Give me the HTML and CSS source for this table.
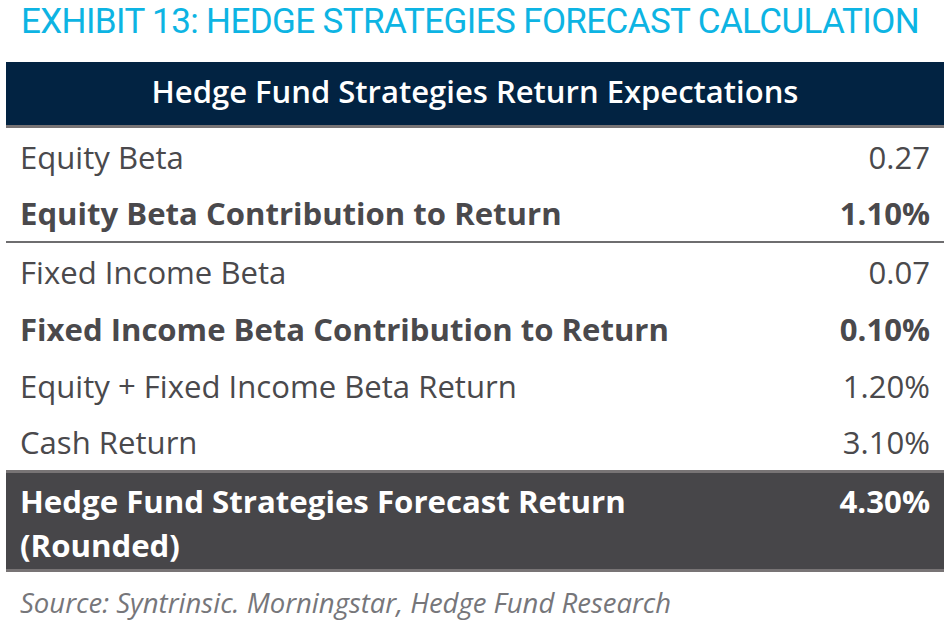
FILE: index.html
```html
<!DOCTYPE html>
<html>
<head>
<meta charset="utf-8">
<link rel="stylesheet" href="styles.css">
</head>
<body>
<div class="page">
  <h1 class="title">EXHIBIT 13: HEDGE STRATEGIES FORECAST CALCULATION</h1>
  <div class="table">
    <div class="head">Hedge Fund Strategies Return Expectations</div>
    <div class="row"><span>Equity Beta</span><span>0.27</span></div>
    <div class="row bold short"><span>Equity Beta Contribution to Return</span><span>1.10%</span></div>
    <div class="row divided"><span>Fixed Income Beta</span><span>0.07</span></div>
    <div class="row bold"><span>Fixed Income Beta Contribution to Return</span><span>0.10%</span></div>
    <div class="row"><span>Equity + Fixed Income Beta Return</span><span>1.20%</span></div>
    <div class="row short"><span>Cash Return</span><span>3.10%</span></div>
    <div class="total"><span>Hedge Fund Strategies Forecast Return<br>(Rounded)</span><span>4.30%</span></div>
  </div>
  <p class="source">Source: Syntrinsic. Morningstar, Hedge Fund Research</p>
</div>
</body>
</html>
```
FILE: styles.css
```css
html, body { margin: 0; padding: 0; background: #fff; }
.page { width: 951px; height: 622px; font-family: "Open Sans", sans-serif; color: #4a494c; overflow: hidden; }
.title {
  margin: 0; padding: 2px 0 0 21px; height: 62px; box-sizing: border-box; white-space: nowrap;
  font-family: Roboto, sans-serif; font-weight: 400; font-size: 35px; line-height: 40px;
  color: #0db4e3; letter-spacing: -0.62px;
}
.table { margin-left: 6px; width: 938px; }
.head {
  background: #022342; color: #fff; font-weight: 600; font-size: 31px;
  height: 63px; line-height: 58px; text-align: center; border-bottom: 3px solid #787475;
}
.row {
  display: flex; justify-content: space-between; align-items: center;
  height: 57px; padding: 0 14px 0 14px; font-size: 31.1px;
}
.row.short { height: 56px; }
.row.bold { font-weight: 700; }
.row.divided { border-top: 2px solid #6e6d6f; }
.total {
  display: flex; justify-content: space-between; align-items: flex-start;
  background: #474649; color: #fff; font-weight: 700; font-size: 31.2px; line-height: 44px;
  border-top: 3px solid #787475; border-bottom: 3px solid #787475;
  padding: 6px 14px 6px 14px; height: 84px;
}
.source {
  margin: 0; padding: 12px 0 0 20px; font-style: italic; font-size: 27.5px; color: #76767a;
}
```
